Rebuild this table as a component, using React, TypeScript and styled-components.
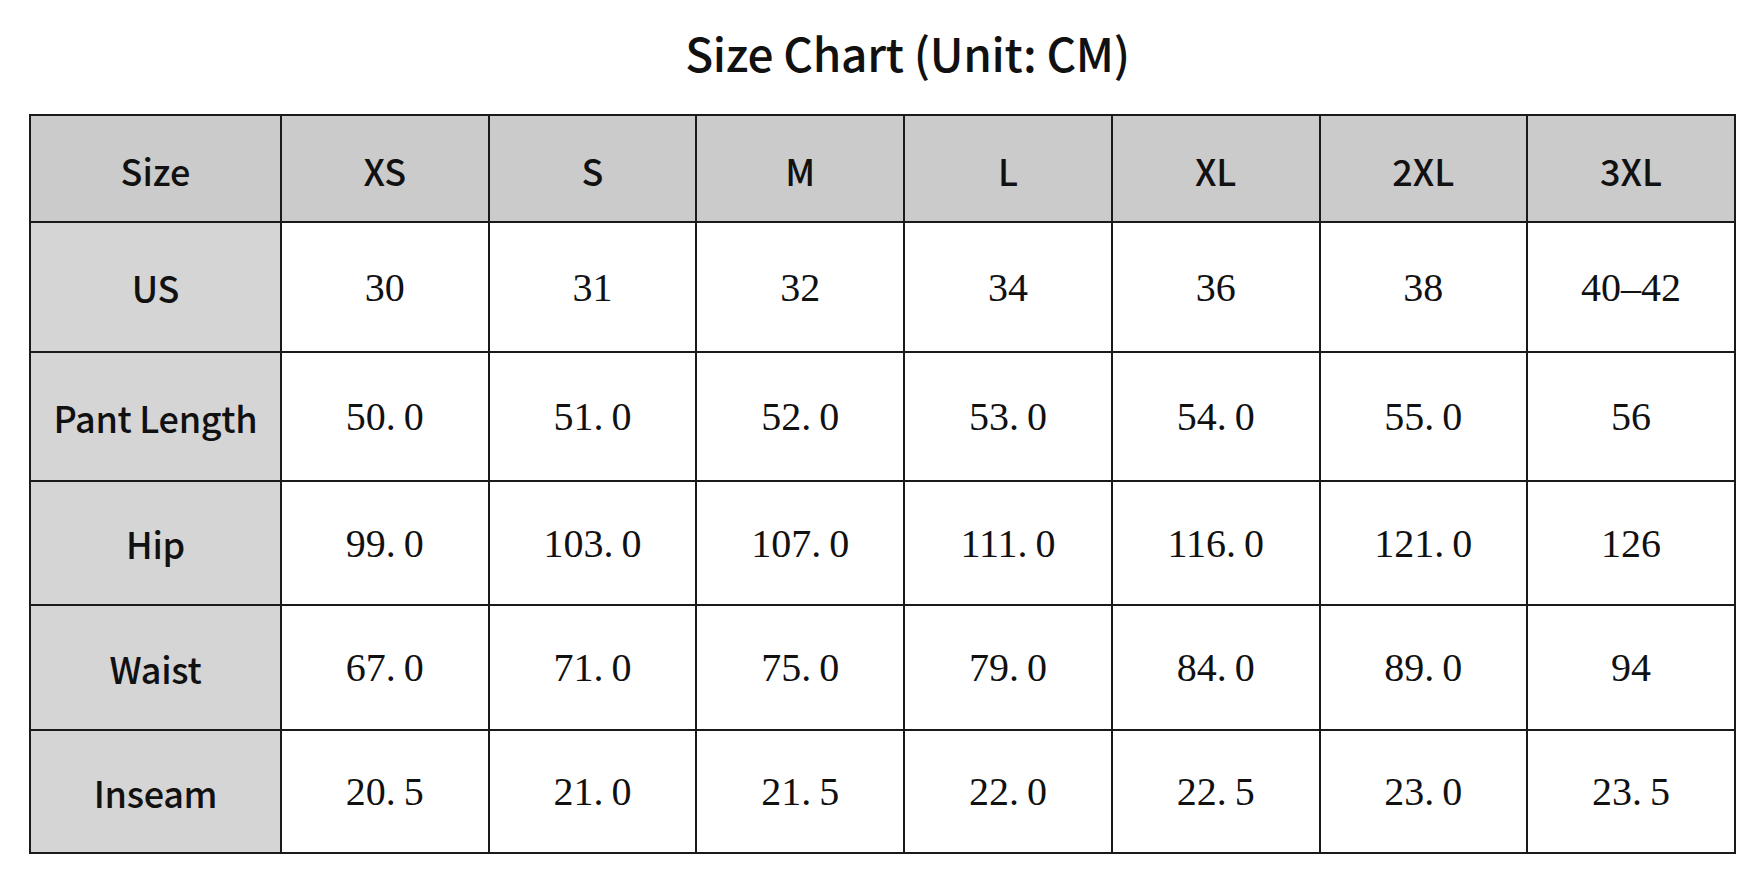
import styled, { createGlobalStyle } from "styled-components";

const GlobalStyle = createGlobalStyle`
  html, body {
    margin: 0;
    padding: 0;
    background: #ffffff;
  }
  body {
    font-family: "Noto Sans CJK SC", "Noto Sans", sans-serif;
    color: #111111;
  }
`;

const sizes = ["XS", "S", "M", "L", "XL", "2XL", "3XL"];

const rows = [
  { label: "US", height: 130, values: ["30", "31", "32", "34", "36", "38", "40–42"] },
  { label: "Pant Length", height: 129, values: ["50.0", "51.0", "52.0", "53.0", "54.0", "55.0", "56"] },
  { label: "Hip", height: 124, values: ["99.0", "103.0", "107.0", "111.0", "116.0", "121.0", "126"] },
  { label: "Waist", height: 125, values: ["67.0", "71.0", "75.0", "79.0", "84.0", "89.0", "94"] },
  { label: "Inseam", height: 123, values: ["20.5", "21.0", "21.5", "22.0", "22.5", "23.0", "23.5"] },
];

const Page = styled.main`
  width: 1758px;
  height: 894px;
  padding: 16px 22px 0 29px;
  box-sizing: border-box;
  display: flex;
  flex-direction: column;
`;

const Title = styled.h1`
  margin: 0 0 14px;
  padding-left: 50px;
  height: 84px;
  line-height: 72px;
  text-align: center;
  font-size: 46px;
  font-weight: 500;
  letter-spacing: -0.3px;
  color: #111;
`;

const Table = styled.table`
  width: 1707px;
  border-collapse: collapse;
  table-layout: fixed;
  border: 2px solid #1a1a1a;
`;

const Row = styled.tr<{ $h: number }>`
  height: ${(p) => p.$h}px;
`;

const HeadCell = styled.th`
  border: 2px solid #1a1a1a;
  background: #cbcbcb;
  font-family: "Noto Sans CJK SC", "Noto Sans", sans-serif;
  font-size: 36px;
  font-weight: 500;
  padding: 2px 0 0;
  text-align: center;
  vertical-align: middle;
  color: #111;
`;

const LabelCell = styled.th`
  border: 2px solid #1a1a1a;
  background: #d5d5d5;
  font-family: "Noto Sans CJK SC", "Noto Sans", sans-serif;
  font-size: 36px;
  font-weight: 500;
  letter-spacing: -0.3px;
  padding: 0;
  text-align: center;
  vertical-align: middle;
  color: #111;
`;

const ValueCell = styled.td`
  border: 2px solid #1a1a1a;
  background: #ffffff;
  font-family: "Liberation Serif", "DejaVu Serif", serif;
  font-size: 40px;
  padding: 0;
  text-align: center;
  vertical-align: middle;
  color: #111;
`;

const Dot = styled.span`
  display: inline-block;
  width: 0.45em;
  text-align: left;
`;

function Value({ text }: { text: string }) {
  const parts = text.split(".");
  if (parts.length < 2) return <>{text}</>;
  return (
    <>
      {parts[0]}
      <Dot>.</Dot>
      {parts[1]}
    </>
  );
}

export default function App() {
  return (
    <>
      <GlobalStyle />
      <Page>
        <Title>Size Chart (Unit: CM)</Title>
        <Table>
          <colgroup>
            <col style={{ width: 251 }} />
            {sizes.map((s) => (
              <col key={s} />
            ))}
          </colgroup>
          <thead>
            <Row $h={107}>
              <HeadCell>Size</HeadCell>
              {sizes.map((s) => (
                <HeadCell key={s}>{s}</HeadCell>
              ))}
            </Row>
          </thead>
          <tbody>
            {rows.map((r) => (
              <Row key={r.label} $h={r.height}>
                <LabelCell>{r.label}</LabelCell>
                {r.values.map((v, i) => (
                  <ValueCell key={i}>
                    <Value text={v} />
                  </ValueCell>
                ))}
              </Row>
            ))}
          </tbody>
        </Table>
      </Page>
    </>
  );
}
